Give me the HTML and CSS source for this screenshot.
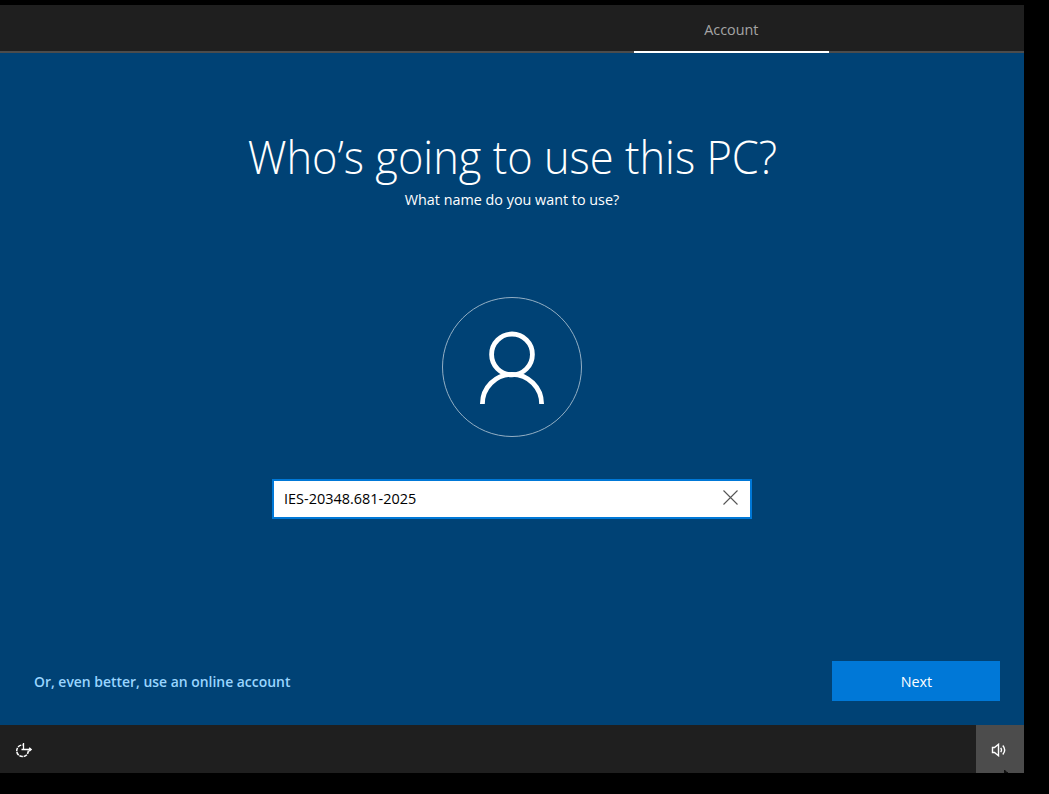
FILE: index.html
```html
<!DOCTYPE html>
<html lang="en">
<head>
    <meta charset="UTF-8">
    <title>Account setup</title>
    <link rel="stylesheet" href="styles.css">
</head>
<body>
<div class="screen">
    <ul class="tabs">
        <li class="active"><span>Account</span></li>
    </ul>
    <div class="content">
        <h1><span class="title">Who’s going to use this PC?</span></h1>
        <p class="sub"><span>What name do you want to use?</span></p>
        <svg class="avatar" width="140" height="140" viewBox="0 0 140 140" fill="none">
            <circle cx="70" cy="70" r="69.5" stroke="#93afc4"/>
            <circle cx="70" cy="57.4" r="20.4" stroke="#fff" stroke-width="4.8"/>
            <path d="M40.4 107a29.6 29.6 0 0 1 59.2 0" stroke="#fff" stroke-width="4.8"/>
        </svg>
        <div class="field">
            <span class="value">IES-20348.681-2025</span>
            <svg class="clear" width="15" height="15" viewBox="0 0 15 15">
                <path d="M.5.5l14 14M14.5.5l-14 14" stroke="#555" stroke-width="1.1" fill="none"/>
            </svg>
        </div>
        <div class="actions">
            <a class="online"><span>Or, even better, use an online account</span></a>
            <div class="next"><span>Next</span></div>
        </div>
    </div>
    <div class="bar">
        <svg class="ease" width="18" height="16" viewBox="0 0 18 16" fill="none" stroke="#fff">
            <path d="M13.3 8.5A5.8 5.8 0 1 1 7.5 3" stroke-width="1.5" stroke-dasharray="3.6 .8"/>
            <path d="M8.5 1v7M6.5 7.5H16M14.2 5.7l2 1.8-2 1.8" stroke-width="1.3"/>
        </svg>
        <div class="volume">
            <svg width="16" height="14" viewBox="0 0 16 14" fill="none" stroke="#fff" stroke-width="1.4">
                <path d="M1.5 4.5h2l4-3.2v11.4l-4-3.2h-2z"/>
                <path d="M9.7 4.8q1.6 2.2 0 4.4M11.8 2.5q3.8 4.5 0 9"/>
            </svg>
            <svg class="pointer" width="5" height="3" viewBox="0 0 5 3">
                <path d="M0 0l1 0 2 2h1v1H0z" fill="#111"/>
            </svg>
        </div>
    </div>
</div>
</body>
</html>
```
FILE: styles.css
```css
body,h1,p,ul,li{margin:0;padding:0;}
ul{list-style-type:none;}
body{background:#000;color:#fff;font:15px/20px "Open Sans","Noto Sans",sans-serif;overflow:hidden;}
svg{display:block;}
span{display:inline-block;white-space:nowrap;transform:scaleX(.957);}
.screen{width:1024px;padding-top:5px;}
.tabs{display:flex;height:46px;background:#1f1f1f;border-bottom:2px solid #4c4c4c;}
.tabs li{width:195px;height:46px;line-height:49px;margin-left:634px;text-align:center;color:#a5a5a5;}
.tabs .active{border-bottom:2px solid #fff;}
.content{display:flex;flex-direction:column;align-items:center;height:672px;background:#004275;}
h1{margin-top:72px;height:62px;line-height:62px;font-size:46px;font-weight:300;}
.title{transform:scaleX(.944);}
.sub{margin-top:2px;}
.avatar{margin-top:88px;}
.field{display:flex;align-items:center;justify-content:space-between;box-sizing:border-box;width:480px;height:40px;margin-top:42px;padding:0 12px 0 10px;background:#fff;border:2px solid #0078d7;color:#000;}
.value{margin-top:-2px;transform-origin:0 50%;transform:scaleX(.963);}
.clear{margin-top:-3px;}
.actions{display:flex;align-items:center;justify-content:space-between;box-sizing:border-box;width:100%;margin-top:142px;padding:0 24px 0 34px;}
.online{color:#99d5ff;font-weight:600;}
.online span{transform-origin:0 50%;transform:scaleX(.928);}
.next{width:168px;height:40px;line-height:40px;text-align:center;background:#0078d7;}
.bar{display:flex;align-items:center;justify-content:space-between;height:48px;padding-left:15px;background:#1f1f1f;}
.ease{margin-top:2px;}
.volume{position:relative;display:flex;align-items:center;justify-content:center;box-sizing:border-box;width:48px;height:48px;padding:2px 3px 0 0;background:#4c4c4c;}
.pointer{position:absolute;right:15px;bottom:0;}
```
